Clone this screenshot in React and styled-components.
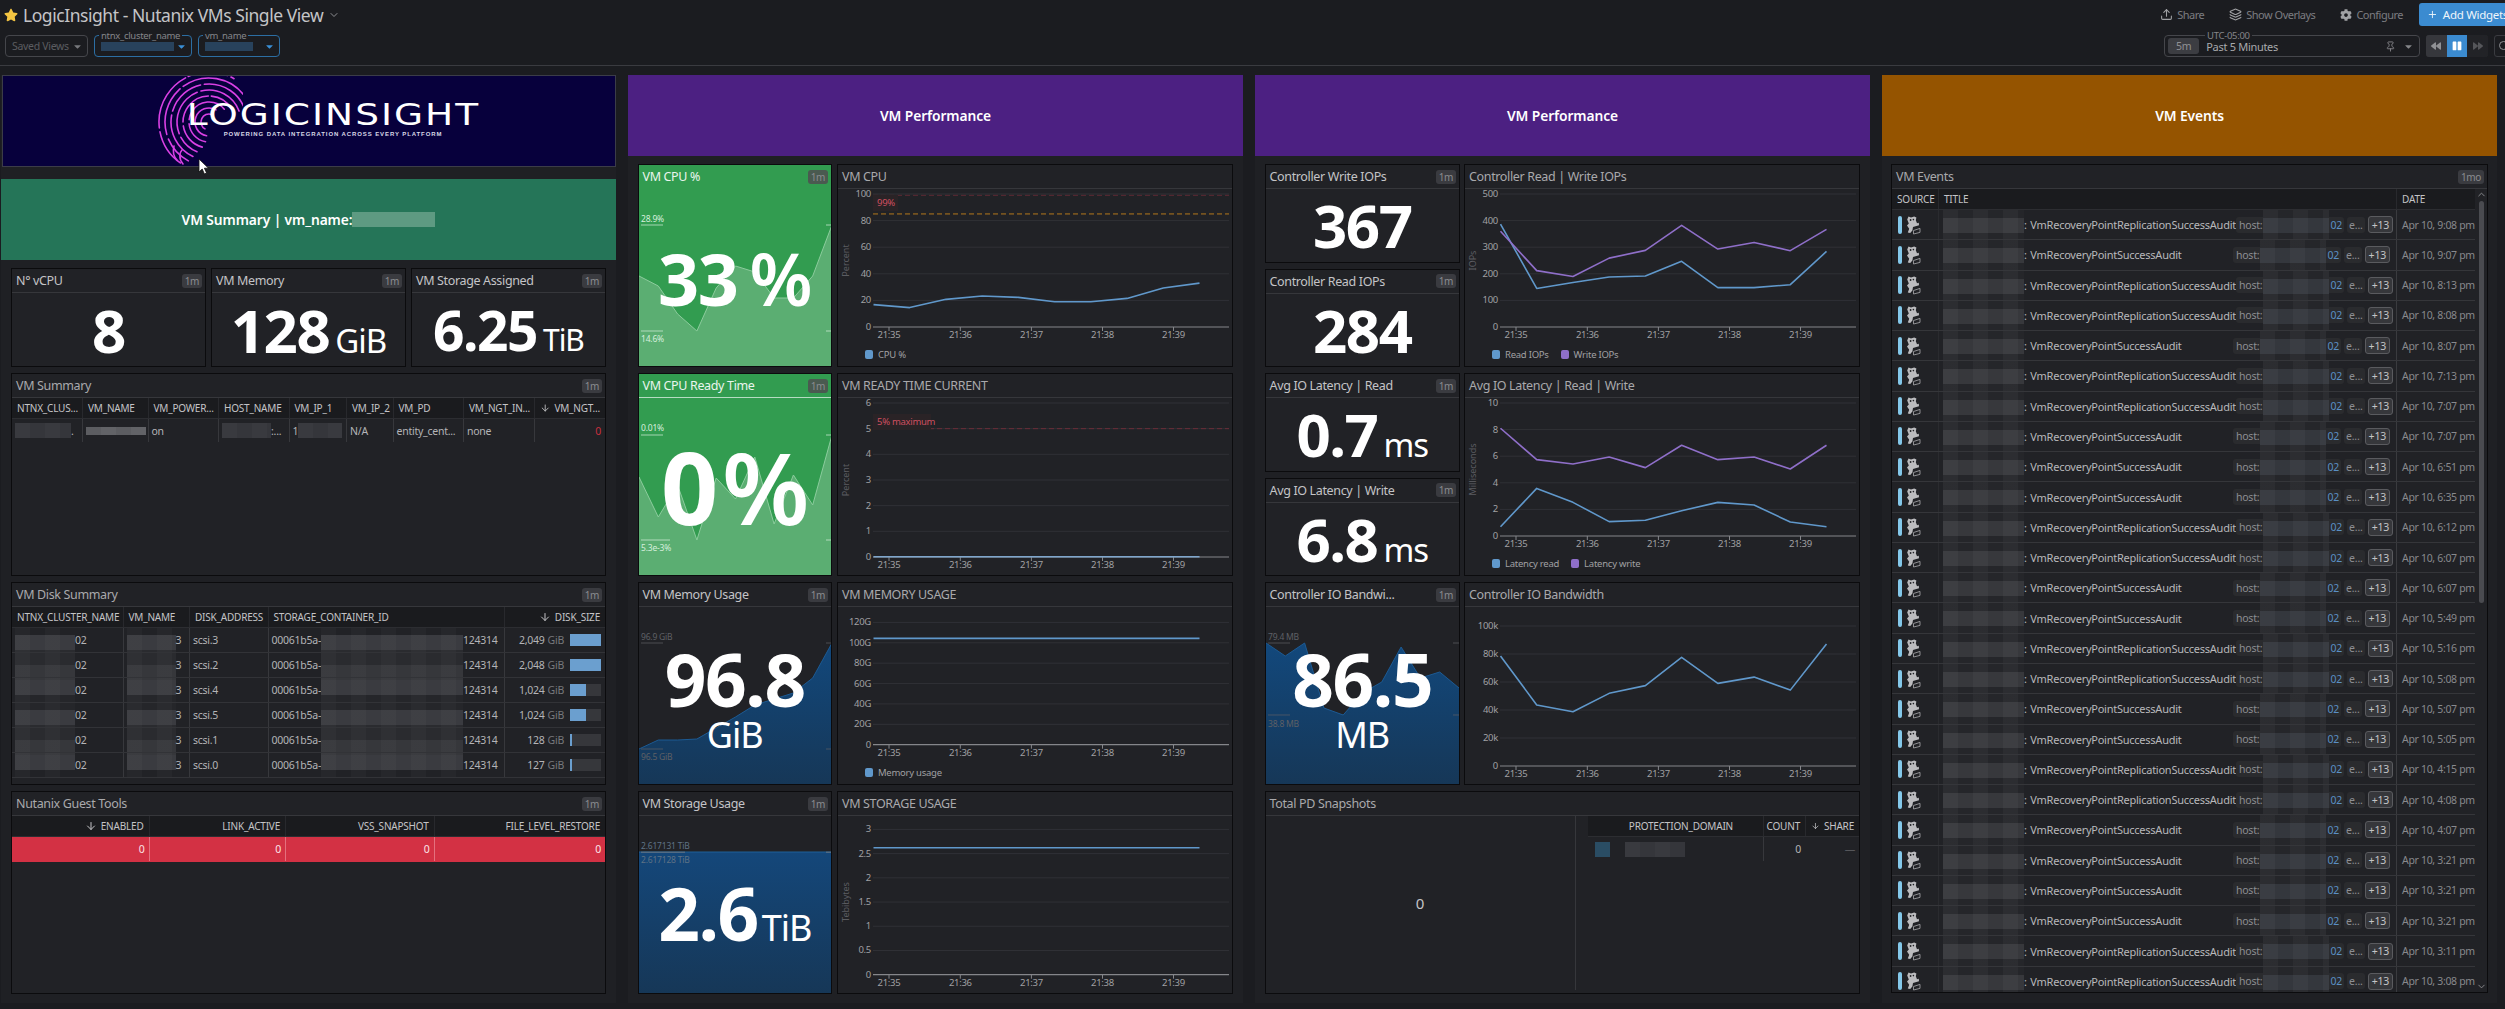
import styled, { createGlobalStyle } from "styled-components";
import { ArrowDown, ChevronDown, ChevronUp, Layers, Pin, Plus, Search, Upload } from "lucide-react";
import { FaBackward, FaCaretDown, FaCog, FaForward, FaPause, FaStar } from "react-icons/fa";

const GlobalStyle = createGlobalStyle`
  html, body {
    margin: 0;
    background: #1b1c20;
    font-family: "Noto Sans", "Liberation Sans", sans-serif;
    overflow: hidden;
  }
  * { box-sizing: border-box; }
`;

const Page = styled.div`
  position: relative;
  width: 2505px;
  height: 1009px;
  overflow: hidden;
  background: #1b1c20;
  color: #c9c9cb;
`;

/* top bar */
const TopBar = styled.header`
  height: 66px;
  border-bottom: 1px solid #3a3b40;
  display: flex;
  justify-content: space-between;
  padding: 3px 0 0 4px;
`;
const BarColumn = styled.div`
  display: flex;
  flex-direction: column;
  align-items: ${(p) => (p.$right ? "flex-end" : "flex-start")};
`;
const TitleRow = styled.div`
  height: 24px;
  display: flex;
  align-items: center;
  gap: 5px;
  color: #c4c4c7;
  font-size: 17.5px;
  letter-spacing: -0.45px;
`;
const FilterRow = styled.div`
  display: flex;
  gap: 6px;
  margin-top: 8px;
  margin-left: 1px;
`;
const Filter = styled.div`
  position: relative;
  width: ${(p) => p.$w}px;
  height: 22px;
  border: 1px solid ${(p) => (p.$active ? "#2c6ea3" : "#45464b")};
  border-radius: 4px;
  display: flex;
  align-items: center;
  justify-content: space-between;
  padding: 0 4px 0 6px;
  font-size: 10.5px;
  letter-spacing: -0.3px;
  color: #5c5d61;
  svg { color: ${(p) => (p.$active ? "#3a8fd6" : "#77787c")}; flex-shrink: 0; }
`;
const FilterLabel = styled.span`
  position: absolute;
  top: -6px;
  left: ${(p) => p.$left || 4}px;
  padding: 0 2px;
  background: #1b1c20;
  font-size: 9.5px;
  line-height: 11px;
  color: #85868a;
`;
const FilterMask = styled.span`
  display: block;
  width: ${(p) => p.$w}px;
  height: 9px;
  background: #28425c;
`;
const ActionRow = styled.div`
  height: 23px;
  display: flex;
  align-items: center;
  margin-right: -3px;
`;
const Action = styled.span`
  display: flex;
  align-items: center;
  gap: 4px;
  margin-right: ${(p) => p.$after || 25}px;
  font-size: 11px;
  letter-spacing: -0.5px;
  color: #7c7d81;
  svg { color: #a0a1a4; }
`;
const AddButton = styled.button`
  height: 23px;
  width: 89px;
  border: 0;
  border-radius: 3px;
  background: #3b8bd0;
  color: #eef5fb;
  font: 11.5px "Noto Sans", sans-serif;
  letter-spacing: -0.3px;
  display: flex;
  align-items: center;
  gap: 5px;
  padding: 0 0 0 8px;
  white-space: nowrap;
`;
const TimeRow = styled.div`
  display: flex;
  align-items: center;
  margin-top: 9px;
  margin-right: -10px;
  gap: 6px;
`;
const TimePicker = styled(Filter)`
  width: 256px;
  color: #a8a9ac;
  justify-content: flex-start;
  gap: 7px;
  padding: 0 5px 0 3px;
  font-size: 11px;
  svg { color: #85868a; }
`;
const TimeChip = styled.span`
  background: #3c3d42;
  border-radius: 3px;
  padding: 1px 8px;
  font-size: 10.5px;
  color: #909195;
`;
const PickerIcons = styled.span`
  margin-left: auto;
  display: flex;
  align-items: center;
  gap: 7px;
`;
const Player = styled.div`
  display: flex;
  height: 22px;
  width: 62px;
  border-radius: 3px;
  overflow: hidden;
  background: #2a2b2f;
`;
const PlayerButton = styled.span`
  flex: 1;
  display: flex;
  align-items: center;
  justify-content: center;
  background: ${(p) => (p.$on ? "#3b8bd0" : p.$dim ? "#222327" : "#36373c")};
  color: ${(p) => (p.$on ? "#fff" : p.$dim ? "#55565a" : "#909195")};
`;
const ZoomButton = styled.span`
  width: 21px;
  height: 22px;
  border: 1px solid #3a3b40;
  border-radius: 3px;
  display: flex;
  align-items: center;
  padding-left: 3px;
  color: #909195;
`;

/* board */
const Board = styled.main`
  display: grid;
  grid-template-columns: repeat(4, 615px);
  column-gap: 12px;
  padding: 9px 0 0 1px;
`;
const Group = styled.section`
  height: 928px;
  background: #1f2024;
  display: flex;
  flex-direction: column;
`;
const Banner = styled.div`
  height: 81px;
  flex-shrink: 0;
  background: ${(p) => p.$bg};
  color: #fff;
  font-size: 13.8px;
  font-weight: 600;
  letter-spacing: -0.1px;
  display: flex;
  align-items: center;
  justify-content: center;
`;
const BannerMask = styled.span`
  display: inline-block;
  width: 83px;
  height: 15px;
  background: #5e9a82;
  vertical-align: middle;
`;
const LogoBanner = styled.div`
  position: relative;
  height: 92px;
  margin: 0 0 12px 1px;
  background: #07003c;
  border: 1px solid #3b3c48;
  display: flex;
  flex-direction: column;
  align-items: center;
  justify-content: center;
  padding: 0 0 4px 48px;
  color: #fff;
`;
const LogoName = styled.div`
  position: relative;
  font: 400 30px/30px "DejaVu Sans", sans-serif;
  letter-spacing: 1.6px;
  white-space: nowrap;
  transform: scaleX(1.25);
`;
const LogoTag = styled.div`
  position: relative;
  font: 700 6px/8px "Liberation Sans", sans-serif;
  letter-spacing: 0.9px;
  color: #d8d8e6;
  white-space: nowrap;
`;
const FingerprintSvg = styled.svg`
  position: absolute;
  left: 128px;
  top: 0;
`;
const Cursor = styled.svg`
  position: absolute;
  left: 198px;
  top: 158px;
`;
const GroupBody = styled.div`
  flex: 1;
  display: grid;
  align-content: start;
  grid-template-columns: ${(p) => p.$cols || "1fr"};
  grid-auto-rows: ${(p) => p.$rows || "203px"};
  gap: 6px ${(p) => p.$gap || 5}px;
  padding: 8px ${(p) => p.$pad || 9.5}px 0;
`;
const SplitStack = styled.div`
  display: grid;
  grid-template-rows: 1fr 1fr;
  gap: 6px;
  min-height: 0;
`;
const TripleRow = styled.div`
  height: 99px;
  display: grid;
  grid-template-columns: repeat(3, 1fr);
  gap: 5px;
`;
const Widget = styled.article`
  position: relative;
  min-width: 0;
  min-height: 0;
  height: ${(p) => (p.$h ? `${p.$h}px` : "auto")};
  display: flex;
  flex-direction: column;
  grid-column: ${(p) => (p.$wide ? "1 / -1" : "auto")};
  background: ${(p) => p.$bg || "#212226"};
  border: 1px solid #0b0b0d;
  overflow: hidden;
`;
const WidgetHead = styled.div`
  flex: 0 0 24px;
  display: flex;
  align-items: center;
  justify-content: space-between;
  padding: 0 3px 0 ${(p) => p.$in || 4}px;
  border-bottom: 1px solid ${(p) => (p.$line ? p.$line : "#36373b")};
  font-size: 12.5px;
  letter-spacing: -0.35px;
  color: ${(p) => p.$color || "#a9a9ac"};
  white-space: nowrap;
`;
const Interval = styled.span`
  flex-shrink: 0;
  min-width: 20px;
  height: 14px;
  padding: 0 3px;
  border-radius: 3px;
  background: ${(p) => p.$bg || "#3a3b40"};
  color: #8b8c90;
  font-size: 10px;
  line-height: 14px;
  text-align: center;
`;
const WidgetBody = styled.div`
  position: relative;
  flex: 1;
  min-height: 0;
  display: flex;
  flex-direction: column;
`;

/* query values */
const ValueCenter = styled.div`
  position: relative;
  flex: 1;
  display: flex;
  align-items: center;
  justify-content: center;
`;
const ValueInline = styled.div`
  color: #fff;
  white-space: nowrap;
  line-height: 1;
  margin-top: ${(p) => p.$shift || 0}px;
  text-align: center;
`;
const Digits = styled.span`
  font-size: ${(p) => p.$size}px;
  font-weight: 700;
  letter-spacing: ${(p) => (p.$size >= 90 ? -4 : -1.5)}px;
`;
const Unit = styled.span`
  display: ${(p) => (p.$block ? "block" : "inline")};
  font-size: ${(p) => p.$size}px;
  font-weight: ${(p) => p.$weight || 400};
  margin-left: ${(p) => (p.$block ? 0 : p.$gap || 6)}px;
  margin-top: ${(p) => (p.$block ? 2 : 0)}px;
  letter-spacing: -1px;
`;
const SparkSvg = styled.svg`
  position: absolute;
  inset: 0;
  width: 100%;
  height: 100%;
`;
const SparkText = styled.text`
  font-size: 8.5px;
  letter-spacing: -0.2px;
  fill: ${(p) => p.$fill};
`;

/* charts */
const ChartSvg = styled.svg`
  display: block;
  flex-shrink: 0;
`;
const TickText = styled.text`
  font-size: 9.5px;
  letter-spacing: -0.3px;
  fill: #a0a0a3;
`;
const AxisTitle = styled.text`
  font-size: 9px;
  fill: #5c5d62;
`;
const MarkerText = styled.text`
  font-size: 9.5px;
  letter-spacing: -0.3px;
  fill: #cf4f60;
`;
const Legend = styled.div`
  flex: 1;
  display: flex;
  align-items: center;
  gap: 12px;
  padding: 0 0 0 27px;
  font-size: 9.5px;
  letter-spacing: -0.25px;
  color: #a0a0a3;
`;
const LegendItem = styled.span`
  display: flex;
  align-items: center;
  gap: 5px;
`;
const Swatch = styled.i`
  width: 8px;
  height: 9px;
  border-radius: 2px;
  background: ${(p) => p.$color};
`;

/* tables */
const TableHead = styled.div`
  display: grid;
  grid-template-columns: ${(p) => p.$cols};
  height: 21px;
  background: #1a1b1e;
  border-bottom: 1px solid #2c2d31;
`;
const HeadCell = styled.div`
  display: flex;
  align-items: center;
  justify-content: ${(p) => (p.$right ? "flex-end" : "flex-start")};
  gap: 4px;
  padding: 0 ${(p) => p.$pr || 5}px 0 5px;
  font-size: 10px;
  letter-spacing: -0.2px;
  color: #c4c4c7;
  white-space: nowrap;
  overflow: hidden;
  border-right: 1px solid #28292d;
  &:last-child { border-right: 0; }
`;
const TableRow = styled.div`
  display: grid;
  grid-template-columns: ${(p) => p.$cols};
  height: ${(p) => p.$h || 25}px;
  background: ${(p) => p.$bg || "transparent"};
  border-bottom: 1px solid ${(p) => p.$line || "#323337"};
`;
const Cell = styled.div`
  display: flex;
  align-items: center;
  justify-content: ${(p) => (p.$right ? "flex-end" : "flex-start")};
  padding: 0 ${(p) => (p.$right ? 4 : 3)}px 0 ${(p) => p.$left ?? 3}px;
  font-size: 10.5px;
  letter-spacing: -0.25px;
  color: ${(p) => p.$color || "#b4b4b7"};
  white-space: nowrap;
  overflow: hidden;
  border-right: 1px solid ${(p) => p.$rule || "#37383c"};
  &:last-child { border-right: 0; }
`;
const Mask = styled.span`
  flex: 0 0 ${(p) => p.$w}px;
  height: ${(p) => p.$h || 15}px;
  background: repeating-linear-gradient(90deg, ${(p) => p.$tone || "#393a3f"} 0 15px, ${(p) => p.$alt || "#35363b"} 15px 30px);
`;
const TallMask = styled.span`
  flex: 0 0 ${(p) => p.$w}px;
  align-self: stretch;
  margin-bottom: -1px;
  background:
    repeating-linear-gradient(90deg, rgba(255,255,255,0.025) 0 15px, transparent 15px 30px),
    linear-gradient(180deg,
      transparent 0 7px, #3a3b40 7px 22px, #2a2b2f 22px 37px, #36373b 37px 52px, #3a3b40 52px 67px,
      #25262a 67px 82px, #3a3b40 82px 97px, #2a2b2f 97px 112px, #36373b 112px 127px, #3a3b40 127px 142px,
      transparent 142px 150px);
  background-position: 0 0, 0 ${(p) => -25 * p.$row}px;
  background-size: auto, 100% 150px;
  background-repeat: repeat, no-repeat;
`;
const RowMask = styled.span`
  flex: 0 0 ${(p) => p.$w}px;
  align-self: stretch;
  margin-bottom: -1px;
  background:
    repeating-linear-gradient(90deg, rgba(255,255,255,0.03) 0 15px, transparent 15px 30px),
    linear-gradient(180deg, #25262a 0 8px, ${(p) => p.$tone || "#37383c"} 8px 23px, #25262a 23px);
`;
const SizeBar = styled.span`
  flex: 0 0 31px;
  height: 12px;
  margin-left: 6px;
  background: #36373b;
  display: block;
`;
const SizeFill = styled.span`
  display: block;
  height: 100%;
  background: #6b9fcf;
`;
const DimUnit = styled.span`
  color: #77787c;
  margin-left: 3px;
`;
const EmptyRest = styled.div`
  flex: 1;
`;

/* PD snapshots */
const SnapshotBody = styled.div`
  flex: 1;
  display: grid;
  grid-template-columns: 310px 1fr;
  min-height: 0;
`;
const SnapshotValue = styled.div`
  border-right: 1px solid #36373b;
  display: flex;
  align-items: center;
  justify-content: center;
  font-size: 15px;
  color: #c4c4c7;
  margin-bottom: 3px;
`;
const SnapshotList = styled.div`
  margin-left: 12px;
`;
const ColorChip = styled.span`
  flex: 0 0 15px;
  height: 15px;
  margin-right: 15px;
  background: #2a4d64;
`;

/* events */
const EventsWrap = styled.div`
  flex: 1;
  display: flex;
  min-height: 0;
  overflow: hidden;
`;
const EventsTable = styled.div`
  flex: 1;
  min-width: 0;
`;
const EventRow = styled.div`
  display: grid;
  grid-template-columns: 47px 458px 79px;
  height: 30.27px;
  border-bottom: 1px solid #35363a;
`;
const SourceCell = styled.div`
  display: flex;
  align-items: center;
  gap: 4px;
  padding-left: 6px;
  border-right: 1px solid #2a2b2f;
`;
const SourceBar = styled.i`
  width: 4px;
  height: 18px;
  border-radius: 2px;
  background: #84c8ea;
`;
const TitleCell = styled.div`
  display: flex;
  align-items: center;
  padding: 0 6px 0 4px;
  border-right: 1px solid #3a3b3f;
  font-size: 11px;
  letter-spacing: -0.25px;
  color: #b8b8bb;
  white-space: nowrap;
  overflow: hidden;
`;
const EventName = styled.span`
  margin-left: 1px;
`;
const Tags = styled.span`
  margin-left: auto;
  align-self: stretch;
  display: flex;
  align-items: center;
  gap: 3px;
`;
const Tag = styled.span`
  height: 16px;
  display: flex;
  align-items: center;
  padding: 0 2px;
  border-radius: 3px;
  background: #2a2b2e;
  font-size: 10.5px;
  letter-spacing: -0.2px;
  color: #8d8e92;
`;
const HostTag = styled(Tag)`
  align-self: stretch;
  height: auto;
  background: transparent;
  padding: 0;
  gap: 0;
`;
const HostPart = styled.span`
  height: 16px;
  line-height: 16px;
  background: #2a2b2e;
  padding: ${(p) => (p.$end ? "0 2px 0 1px" : "0 1px 0 3px")};
  border-radius: ${(p) => (p.$end ? "0 3px 3px 0" : "3px 0 0 3px")};
  color: ${(p) => (p.$end ? "#5a8fc4" : "#8d8e92")};
`;
const CountTag = styled(Tag)`
  height: 17px;
  padding: 0 3px;
  background: #36373b;
  border: 1px solid #5a5b5f;
  color: #c4c4c7;
`;
const DateCell = styled.div`
  display: flex;
  align-items: center;
  padding-left: 5px;
  font-size: 10.5px;
  letter-spacing: -0.32px;
  color: #88898d;
  white-space: nowrap;
`;
const Scroll = styled.div`
  flex: 0 0 12px;
  display: flex;
  flex-direction: column;
  align-items: center;
  color: #8d8e92;
`;
const ScrollThumb = styled.div`
  width: 5px;
  height: 402px;
  margin: 1px 0 auto;
  border-radius: 3px;
  background: #4a4b50;
`;

const TICK_X = [51, 122.3, 193.4, 264.5, 335.5];
const TICK_LABELS = ["21:35", "21:36", "21:37", "21:38", "21:39"];
const BLUE = "#6098cb";
const PURPLE = "#8f6fc9";

function Chart({ h, top, zero, max, ticks, series, yTitle, markers = [] }) {
  const left = 35;
  const right = 391;
  const y = (v) => zero - (v / max) * (zero - top);
  const x = (i, n) => 35.5 + (i * 326) / (n - 1);
  return (
    <ChartSvg width="394" height={h}>
      {ticks.map(([v, label]) => (
        <g key={label}>
          {v !== 0 && <line x1={left} x2={right} y1={y(v)} y2={y(v)} stroke="#303136" />}
          <TickText x="33" y={y(v) + 3} textAnchor="end">{label}</TickText>
        </g>
      ))}
      <line x1={left} x2={right} y1={zero} y2={zero} stroke="#85868a" strokeWidth="1.2" />
      {TICK_X.map((tx, i) => (
        <g key={tx}>
          <line x1={tx} x2={tx} y1={zero} y2={zero + 4} stroke="#85868a" />
          <TickText x={tx} y={zero + 11} textAnchor="middle">{TICK_LABELS[i]}</TickText>
        </g>
      ))}
      <AxisTitle transform={`translate(11 ${(top + zero) / 2}) rotate(-90)`} textAnchor="middle">{yTitle}</AxisTitle>
      {markers.map((m) => (
        <g key={m.v}>
          <line x1={left} x2={right} y1={y(m.v)} y2={y(m.v)} stroke={m.color} strokeDasharray="5 3" />
          {m.label && (
            <g>
              <rect x={left} y={m.boxY} width={m.boxW} height="16" fill="#2a2326" />
              <MarkerText x={left + 4} y={m.boxY + 11}>{m.label}</MarkerText>
            </g>
          )}
        </g>
      ))}
      {series.map((s) => (
        <polyline
          key={s.color + s.data[0]}
          fill="none"
          stroke={s.color}
          strokeWidth="1.6"
          strokeLinejoin="round"
          points={s.data.map((v, i) => `${x(i, s.data.length)},${y(v)}`).join(" ")}
        />
      ))}
    </ChartSvg>
  );
}

function Spark({ points, fill, line, label, marks, gradient }) {
  const w = 193;
  const h = 178;
  const coords = points.map((py, i) => `${(i * w) / (points.length - 1)},${py}`).join(" ");
  const id = `fill${gradient ? gradient.join("") : fill}`.replace(/#/g, "");
  return (
    <SparkSvg>
      {gradient && (
        <defs>
          <linearGradient id={id} x1="0" y1="0" x2="0" y2="1">
            <stop offset="0" stopColor={gradient[0]} />
            <stop offset="1" stopColor={gradient[1]} />
          </linearGradient>
        </defs>
      )}
      <polygon points={`0,${h} ${coords} ${w},${h}`} fill={gradient ? `url(#${id})` : fill} />
      <polyline points={coords} fill="none" stroke={line} strokeWidth="1" />
      {marks.map((m) => (
        <g key={m.text}>
          <line x1="2" x2={m.len || 24} y1={m.y} y2={m.y} stroke={label} strokeOpacity="0.7" />
          <line x1={w - 6} x2={w} y1={m.y} y2={m.y} stroke={label} strokeOpacity="0.7" />
          <SparkText x="2" y={m.ty} $fill={label}>{m.text}</SparkText>
        </g>
      ))}
    </SparkSvg>
  );
}

function Fingerprint() {
  const cx = 78;
  const cy = 46;
  const polar = (r, a) => [cx + r * Math.cos((a * Math.PI) / 180), cy + r * Math.sin((a * Math.PI) / 180)];
  const rings = [
    [50, 125, 300, "38 4 60 3 40 4 200"],
    [44, 118, 335, "30 5 50 4 70 4 200"],
    [38, 115, 345, "50 4 40 4 60 4 200"],
    [32, 112, 340, "22 4 50 4 200"],
    [26, 105, 330, "30 4 40 3 200"],
    [20, 100, 320, "26 4 200"],
    [14, 100, 300, "200"],
    [8, 120, 290, "200"],
  ];
  return (
    <FingerprintSvg width="112" height="92">
      <g fill="none" stroke="#d940e4" strokeWidth="1.6" strokeLinecap="round">
        {rings.map(([r, a0, a1, dash]) => {
          const [x0, y0] = polar(r, a0);
          const [x1, y1] = polar(r, a1);
          return (
            <path
              key={r}
              d={`M${x0} ${y0} A${r} ${r} 0 ${a1 - a0 > 180 ? 1 : 0} 1 ${x1} ${y1}`}
              strokeDasharray={dash}
            />
          );
        })}
        <path d="M52 88 C47 82 49 76 51 74 M46 84 C42 80 42 74 43 70" />
      </g>
    </FingerprintSvg>
  );
}

function DogIcon() {
  return (
    <svg width="15" height="20" viewBox="0 0 15 20">
      <path
        fill="#bcbcbf"
        d="M2.500 1.500 5 2.600 8.200 1.600 10.400 2.600 9.800 5.200 11 8.200 12.800 7.800 13 10.200 10.400 11 7 12 6.400 15.500 4.200 18 1.800 17.400 3.200 13.800 1 10.600 2.800 8.400 1.200 4.600z"
      />
      <path fill="none" stroke="#9c9c9f" strokeWidth="0.9" d="M7.500 15.500 14 13.400V17.400L7.500 19z" />
      <circle cx="4.600" cy="5" r="0.9" fill="#212226" />
      <circle cx="7.400" cy="4.600" r="0.8" fill="#212226" />
    </svg>
  );
}

const Head = ({ title, interval = "1m", color, line, chipBg }) => (
  <WidgetHead $color={color} $line={line}>
    <span>{title}</span>
    {interval && <Interval $bg={chipBg}>{interval}</Interval>}
  </WidgetHead>
);

const SimpleValue = ({ value, unit, size = 60, unitSize = 33 }) => (
  <ValueCenter>
    <ValueInline>
      <Digits $size={size}>{value}</Digits>
      {unit && <Unit $size={unitSize}>{unit}</Unit>}
    </ValueInline>
  </ValueCenter>
);

const SUMMARY_COLS = "71px 65.5px 70.5px 70.5px 57.5px 46.5px 70.5px 71px 1fr";
const DISK_COLS = "111.5px 66.5px 78.5px 236.5px 1fr";
const GUEST_COLS = "137.5px 136.5px 148.5px 1fr";
const PD_COLS = "1fr 42px 53px";

const DISKS = [
  { addr: "scsi.3", size: "2,049", pct: 100 },
  { addr: "scsi.2", size: "2,048", pct: 100 },
  { addr: "scsi.4", size: "1,024", pct: 52 },
  { addr: "scsi.5", size: "1,024", pct: 52 },
  { addr: "scsi.1", size: "128", pct: 6 },
  { addr: "scsi.0", size: "127", pct: 6 },
];

const REPL = "VmRecoveryPointReplicationSuccessAudit";
const POINT = "VmRecoveryPointSuccessAudit";
const EVENTS = [
  [REPL, "9:08"], [POINT, "9:07"], [REPL, "8:13"], [REPL, "8:08"], [POINT, "8:07"], [REPL, "7:13"],
  [REPL, "7:07"], [POINT, "7:07"], [POINT, "6:51"], [POINT, "6:35"], [REPL, "6:12"], [REPL, "6:07"],
  [POINT, "6:07"], [POINT, "5:49"], [REPL, "5:16"], [REPL, "5:08"], [POINT, "5:07"], [POINT, "5:05"],
  [REPL, "4:15"], [REPL, "4:08"], [POINT, "4:07"], [POINT, "3:21"], [POINT, "3:21"], [POINT, "3:21"],
  [REPL, "3:11"], [REPL, "3:08"],
];

export default function App() {
  return (
    <Page>
      <GlobalStyle />
      <TopBar>
        <BarColumn>
          <TitleRow>
            <FaStar size={14} color="#f4c542" />
            LogicInsight - Nutanix VMs Single View
            <ChevronDown size={12} color="#8d8e92" />
          </TitleRow>
          <FilterRow>
            <Filter $w={83}>Saved Views<FaCaretDown size={11} /></Filter>
            <Filter $w={98} $active>
              <FilterLabel>ntnx_cluster_name</FilterLabel>
              <FilterMask $w={73} />
              <FaCaretDown size={11} />
            </Filter>
            <Filter $w={82} $active>
              <FilterLabel>vm_name</FilterLabel>
              <FilterMask $w={48} />
              <FaCaretDown size={11} />
            </Filter>
          </FilterRow>
        </BarColumn>
        <BarColumn $right>
          <ActionRow>
            <Action><Upload size={13} />Share</Action>
            <Action><Layers size={13} />Show Overlays</Action>
            <Action $after={16}><FaCog size={12} />Configure</Action>
            <AddButton><Plus size={13} />Add Widgets</AddButton>
          </ActionRow>
          <TimeRow>
            <TimePicker>
              <FilterLabel $left={40}>UTC-05:00</FilterLabel>
              <TimeChip>5m</TimeChip>
              Past 5 Minutes
              <PickerIcons><Pin size={11} /><FaCaretDown size={11} /></PickerIcons>
            </TimePicker>
            <Player>
              <PlayerButton><FaBackward size={10} /></PlayerButton>
              <PlayerButton $on><FaPause size={10} /></PlayerButton>
              <PlayerButton $dim><FaForward size={10} /></PlayerButton>
            </Player>
            <ZoomButton><Search size={12} /></ZoomButton>
          </TimeRow>
        </BarColumn>
      </TopBar>

      <Board>
        <Group>
          <LogoBanner>
            <Fingerprint />
            <LogoName>LOGICINSIGHT</LogoName>
            <LogoTag>POWERING DATA INTEGRATION ACROSS EVERY PLATFORM</LogoTag>
          </LogoBanner>
          <Banner $bg="#257558">VM Summary | vm_name:<BannerMask /></Banner>
          <GroupBody $pad={10} $rows="auto">
            <TripleRow>
              <Widget>
                <Head title="N° vCPU" color="#c4c4c7" />
                <WidgetBody><SimpleValue value="8" /></WidgetBody>
              </Widget>
              <Widget>
                <Head title="VM Memory" color="#c4c4c7" />
                <WidgetBody><SimpleValue value="128" unit="GiB" /></WidgetBody>
              </Widget>
              <Widget>
                <Head title="VM Storage Assigned" color="#c4c4c7" />
                <WidgetBody><SimpleValue value="6.25" unit="TiB" size={55} unitSize={30} /></WidgetBody>
              </Widget>
            </TripleRow>

            <Widget $h={203}>
              <Head title="VM Summary" />
              <WidgetBody>
                <TableHead $cols={SUMMARY_COLS}>
                  {["NTNX_CLUS...", "VM_NAME", "VM_POWER...", "HOST_NAME", "VM_IP_1", "VM_IP_2", "VM_PD", "VM_NGT_IN..."].map((t) => (
                    <HeadCell key={t}>{t}</HeadCell>
                  ))}
                  <HeadCell><ArrowDown size={12} />VM_NGT...</HeadCell>
                </TableHead>
                <TableRow $cols={SUMMARY_COLS} $h={24} $line="transparent">
                  <Cell><Mask $w={56} />.</Cell>
                  <Cell><Mask $w={60} $h={8} $tone="#5c5d61" $alt="#626367" /></Cell>
                  <Cell>on</Cell>
                  <Cell><Mask $w={49} />:...</Cell>
                  <Cell>1<Mask $w={44} /></Cell>
                  <Cell>N/A</Cell>
                  <Cell>entity_cent...</Cell>
                  <Cell>none</Cell>
                  <Cell $right $color="#c8303f">0</Cell>
                </TableRow>
              </WidgetBody>
            </Widget>

            <Widget $h={203}>
              <Head title="VM Disk Summary" />
              <WidgetBody>
                <TableHead $cols={DISK_COLS}>
                  {["NTNX_CLUSTER_NAME", "VM_NAME", "DISK_ADDRESS", "STORAGE_CONTAINER_ID"].map((t) => (
                    <HeadCell key={t}>{t}</HeadCell>
                  ))}
                  <HeadCell $right><ArrowDown size={12} />DISK_SIZE</HeadCell>
                </TableHead>
                {DISKS.map((d, i) => (
                  <TableRow $cols={DISK_COLS} key={d.addr}>
                    <Cell><TallMask $w={60} $row={i} />02</Cell>
                    <Cell><TallMask $w={49} $row={i} />3</Cell>
                    <Cell>{d.addr}</Cell>
                    <Cell>00061b5a-<TallMask $w={142} $row={i} />124314</Cell>
                    <Cell $right>
                      {d.size}<DimUnit>GiB</DimUnit>
                      <SizeBar><SizeFill style={{ width: `${d.pct}%` }} /></SizeBar>
                    </Cell>
                  </TableRow>
                ))}
                <EmptyRest />
              </WidgetBody>
            </Widget>

            <Widget $h={203}>
              <Head title="Nutanix Guest Tools" />
              <WidgetBody>
                <TableHead $cols={GUEST_COLS}>
                  <HeadCell $right><ArrowDown size={12} />ENABLED</HeadCell>
                  <HeadCell $right>LINK_ACTIVE</HeadCell>
                  <HeadCell $right>VSS_SNAPSHOT</HeadCell>
                  <HeadCell $right>FILE_LEVEL_RESTORE</HeadCell>
                </TableHead>
                <TableRow $cols={GUEST_COLS} $bg="#d33144" $line="#d33144">
                  {[0, 1, 2, 3].map((k) => (
                    <Cell key={k} $right $color="#fbe4e7" $rule="#e4707e">0</Cell>
                  ))}
                </TableRow>
              </WidgetBody>
            </Widget>
          </GroupBody>
        </Group>

        <Group>
          <Banner $bg="#4c2082">VM Performance</Banner>
          <GroupBody $cols="194.5px 396px">
            <Widget $bg="#329c50">
              <Head title="VM CPU %" color="#eaf5ee" line="#329c50" chipBg="#4a5a50" />
              <WidgetBody>
                <Spark
                  points={[87, 97, 125, 142, 99, 77, 83, 109, 109, 87, 36]}
                  fill="#5bae72"
                  line="#8ccc9d"
                  label="#d6efdd"
                  marks={[{ y: 36, ty: 33, text: "28.9%" }, { y: 142, ty: 153, text: "14.6%" }]}
                />
                <ValueCenter>
                  <ValueInline>
                    <Digits $size={72}>33</Digits>
                    <Unit $size={72} $weight={600} $gap={12}>%</Unit>
                  </ValueInline>
                </ValueCenter>
              </WidgetBody>
            </Widget>
            <Widget>
              <Head title="VM CPU" interval={null} />
              <WidgetBody>
                <Chart
                  h={154} top={5} zero={138} max={100} yTitle="Percent"
                  ticks={[[0, "0"], [20, "20"], [40, "40"], [60, "60"], [80, "80"], [100, "100"]]}
                  markers={[
                    { v: 99, color: "#5d2a33", label: "99%", boxY: 6, boxW: 25 },
                    { v: 85, color: "#b5781c" },
                  ]}
                  series={[{ color: BLUE, data: [16.8, 14.6, 20.8, 23.3, 22.3, 19, 19, 21.5, 29.3, 33] }]}
                />
                <Legend><LegendItem><Swatch $color={BLUE} />CPU %</LegendItem></Legend>
              </WidgetBody>
            </Widget>

            <Widget $bg="#329c50">
              <Head title="VM CPU Ready Time" color="#eaf5ee" line="#b6dcc2" chipBg="#4a5a50" />
              <WidgetBody>
                <Spark
                  points={[79, 119, 87, 142, 80, 101, 59, 126, 77, 107, 37]}
                  fill="#5bae72"
                  line="#8ccc9d"
                  label="#d6efdd"
                  marks={[{ y: 37, ty: 33, text: "0.01%" }, { y: 142, ty: 153, text: "5.3e-3%", len: 31 }]}
                />
                <ValueCenter>
                  <ValueInline $shift={-2}>
                    <Digits $size={100}>0</Digits>
                    <Unit $size={100} $weight={600} $gap={8}>%</Unit>
                  </ValueInline>
                </ValueCenter>
              </WidgetBody>
            </Widget>
            <Widget>
              <Head title="VM READY TIME CURRENT" interval={null} />
              <WidgetBody>
                <Chart
                  h={178} top={5} zero={159} max={6} yTitle="Percent"
                  ticks={[[0, "0"], [1, "1"], [2, "2"], [3, "3"], [4, "4"], [5, "5"], [6, "6"]]}
                  markers={[{ v: 5, color: "#6b2c37", label: "5% maximum", boxY: 16, boxW: 58 }]}
                  series={[{ color: "#7fa6cc", data: [0.01, 0.01, 0.01, 0.01, 0.01, 0.01, 0.01, 0.01, 0.01, 0.01] }]}
                />
              </WidgetBody>
            </Widget>

            <Widget>
              <Head title="VM Memory Usage" color="#c4c4c7" />
              <WidgetBody>
                <Spark
                  points={[142, 133, 133, 132, 121, 110, 98, 92, 86, 71, 36]}
                  gradient={["#12487c", "#163757"]}
                  line="#1c5a93"
                  label="#5f6065"
                  marks={[{ y: 36, ty: 33, text: "96.9 GiB" }, { y: 142, ty: 153, text: "96.5 GiB" }]}
                />
                <ValueCenter>
                  <ValueInline $shift={4}>
                    <Digits $size={73}>96.8</Digits>
                    <Unit $block $size={36}>GiB</Unit>
                  </ValueInline>
                </ValueCenter>
              </WidgetBody>
            </Widget>
            <Widget>
              <Head title="VM MEMORY USAGE" interval={null} />
              <WidgetBody>
                <Chart
                  h={154} top={15.4} zero={137.7} max={120} yTitle=""
                  ticks={[[0, "0"], [20, "20G"], [40, "40G"], [60, "60G"], [80, "80G"], [100, "100G"], [120, "120G"]]}
                  series={[{ color: BLUE, data: [104.3, 104.3, 104.3, 104.3, 104.3, 104.3, 104.3, 104.3, 104.3, 104.3] }]}
                />
                <Legend><LegendItem><Swatch $color={BLUE} />Memory usage</LegendItem></Legend>
              </WidgetBody>
            </Widget>

            <Widget>
              <Head title="VM Storage Usage" color="#c4c4c7" />
              <WidgetBody>
                <Spark
                  points={[36, 36]}
                  gradient={["#14477a", "#163757"]}
                  line="#1f6099"
                  label="#5f7285"
                  marks={[{ y: 36, ty: 33, text: "2.617131 TiB", len: 46 }, { y: 36.5, ty: 47, text: "2.617128 TiB", len: 46 }]}
                />
                <ValueCenter>
                  <ValueInline $shift={16}>
                    <Digits $size={73}>2.6</Digits>
                    <Unit $size={36} $gap={4}>TiB</Unit>
                  </ValueInline>
                </ValueCenter>
              </WidgetBody>
            </Widget>
            <Widget>
              <Head title="VM STORAGE USAGE" interval={null} />
              <WidgetBody>
                <Chart
                  h={178} top={13.4} zero={158.7} max={3} yTitle="Tebibytes"
                  ticks={[[0, "0"], [0.5, "0.5"], [1, "1"], [1.5, "1.5"], [2, "2"], [2.5, "2.5"], [3, "3"]]}
                  series={[{ color: BLUE, data: [2.62, 2.62, 2.62, 2.62, 2.62, 2.62, 2.62, 2.62, 2.62, 2.62] }]}
                />
              </WidgetBody>
            </Widget>
          </GroupBody>
        </Group>

        <Group>
          <Banner $bg="#4c2082">VM Performance</Banner>
          <GroupBody $cols="195.5px 396px" $gap={4}>
            <SplitStack>
              <Widget>
                <Head title="Controller Write IOPs" color="#c4c4c7" />
                <WidgetBody><SimpleValue value="367" /></WidgetBody>
              </Widget>
              <Widget>
                <Head title="Controller Read IOPs" color="#c4c4c7" />
                <WidgetBody><SimpleValue value="284" /></WidgetBody>
              </Widget>
            </SplitStack>
            <Widget>
              <Head title="Controller Read | Write IOPs" interval={null} />
              <WidgetBody>
                <Chart
                  h={154} top={5} zero={138} max={500} yTitle="IOPs"
                  ticks={[[0, "0"], [100, "100"], [200, "200"], [300, "300"], [400, "400"], [500, "500"]]}
                  series={[
                    { color: BLUE, data: [387, 145, 167, 188, 192, 247, 148, 148, 159, 284] },
                    { color: PURPLE, data: [360, 212, 190, 259, 288, 382, 293, 318, 287, 367] },
                  ]}
                />
                <Legend>
                  <LegendItem><Swatch $color={BLUE} />Read IOPs</LegendItem>
                  <LegendItem><Swatch $color={PURPLE} />Write IOPs</LegendItem>
                </Legend>
              </WidgetBody>
            </Widget>

            <SplitStack>
              <Widget>
                <Head title="Avg IO Latency | Read" color="#c4c4c7" />
                <WidgetBody><SimpleValue value="0.7" unit="ms" /></WidgetBody>
              </Widget>
              <Widget>
                <Head title="Avg IO Latency | Write" color="#c4c4c7" />
                <WidgetBody><SimpleValue value="6.8" unit="ms" /></WidgetBody>
              </Widget>
            </SplitStack>
            <Widget>
              <Head title="Avg IO Latency | Read | Write" interval={null} />
              <WidgetBody>
                <Chart
                  h={154} top={5} zero={138} max={10} yTitle="Milliseconds"
                  ticks={[[0, "0"], [2, "2"], [4, "4"], [6, "6"], [8, "8"], [10, "10"]]}
                  series={[
                    { color: BLUE, data: [0.7, 3.58, 2.53, 1.08, 1.18, 1.9, 2.53, 2.33, 1.05, 0.7] },
                    { color: PURPLE, data: [8.1, 5.74, 5.41, 5.94, 5.14, 6.82, 5.74, 5.94, 5.04, 6.82] },
                  ]}
                />
                <Legend>
                  <LegendItem><Swatch $color={BLUE} />Latency read</LegendItem>
                  <LegendItem><Swatch $color={PURPLE} />Latency write</LegendItem>
                </Legend>
              </WidgetBody>
            </Widget>

            <Widget>
              <Head title="Controller IO Bandwi..." color="#c4c4c7" />
              <WidgetBody>
                <Spark
                  points={[36, 49, 36, 101, 108, 86, 75, 40, 71, 65, 81]}
                  gradient={["#12487c", "#163757"]}
                  line="#1c5a93"
                  label="#5f6065"
                  marks={[{ y: 36, ty: 33, text: "79.4 MB" }, { y: 108, ty: 120, text: "38.8 MB" }]}
                />
                <ValueCenter>
                  <ValueInline $shift={4}>
                    <Digits $size={73}>86.5</Digits>
                    <Unit $block $size={36}>MB</Unit>
                  </ValueInline>
                </ValueCenter>
              </WidgetBody>
            </Widget>
            <Widget>
              <Head title="Controller IO Bandwidth" interval={null} />
              <WidgetBody>
                <Chart
                  h={178} top={19} zero={159} max={100} yTitle=""
                  ticks={[[0, "0"], [20, "20k"], [40, "40k"], [60, "60k"], [80, "80k"], [100, "100k"]]}
                  series={[{ color: BLUE, data: [78.6, 43.6, 38.8, 51.9, 57.4, 77.6, 59, 63.5, 54.2, 87.1] }]}
                />
              </WidgetBody>
            </Widget>

            <Widget $wide>
              <Head title="Total PD Snapshots" interval={null} />
              <SnapshotBody>
                <SnapshotValue>0</SnapshotValue>
                <SnapshotList>
                  <TableHead $cols={PD_COLS}>
                    <HeadCell $right $pr={30}>PROTECTION_DOMAIN</HeadCell>
                    <HeadCell $right>COUNT</HeadCell>
                    <HeadCell $right><ArrowDown size={12} />SHARE</HeadCell>
                  </TableHead>
                  <TableRow $cols={PD_COLS} $line="transparent">
                    <Cell $left={7}><ColorChip /><Mask $w={60} /></Cell>
                    <Cell $right $rule="transparent">0</Cell>
                    <Cell $right $color="#55565a">—</Cell>
                  </TableRow>
                </SnapshotList>
              </SnapshotBody>
            </Widget>
          </GroupBody>
        </Group>

        <Group>
          <Banner $bg="#955400">VM Events</Banner>
          <GroupBody $pad={9} $rows="829px">
            <Widget>
              <Head title="VM Events" interval="1mo" />
              <EventsWrap>
                <EventsTable>
                  <TableHead $cols="47px 458px 79px">
                    <HeadCell>SOURCE</HeadCell>
                    <HeadCell>TITLE</HeadCell>
                    <HeadCell>DATE</HeadCell>
                  </TableHead>
                  {EVENTS.map(([name, time], i) => (
                    <EventRow key={i}>
                      <SourceCell><SourceBar /><DogIcon /></SourceCell>
                      <TitleCell>
                        <RowMask $w={81} />
                        :&nbsp;<EventName>{name}</EventName>
                        <Tags>
                          <HostTag>
                            <HostPart>host:</HostPart>
                            <RowMask $w={66} $tone="#34373d" />
                            <HostPart $end>02</HostPart>
                          </HostTag>
                          <Tag>e...</Tag>
                          <CountTag>+13</CountTag>
                        </Tags>
                      </TitleCell>
                      <DateCell>Apr 10, {time} pm</DateCell>
                    </EventRow>
                  ))}
                </EventsTable>
                <Scroll>
                  <ChevronUp size={11} />
                  <ScrollThumb />
                  <ChevronDown size={11} />
                </Scroll>
              </EventsWrap>
            </Widget>
          </GroupBody>
        </Group>
      </Board>

      <Cursor width="12" height="18" viewBox="0 0 12 18">
        <path d="M1 1v13l3.2-3 2.2 5 2.2-1-2.2-4.8H10.500z" fill="#fff" stroke="#111" strokeWidth="0.8" />
      </Cursor>
    </Page>
  );
}
